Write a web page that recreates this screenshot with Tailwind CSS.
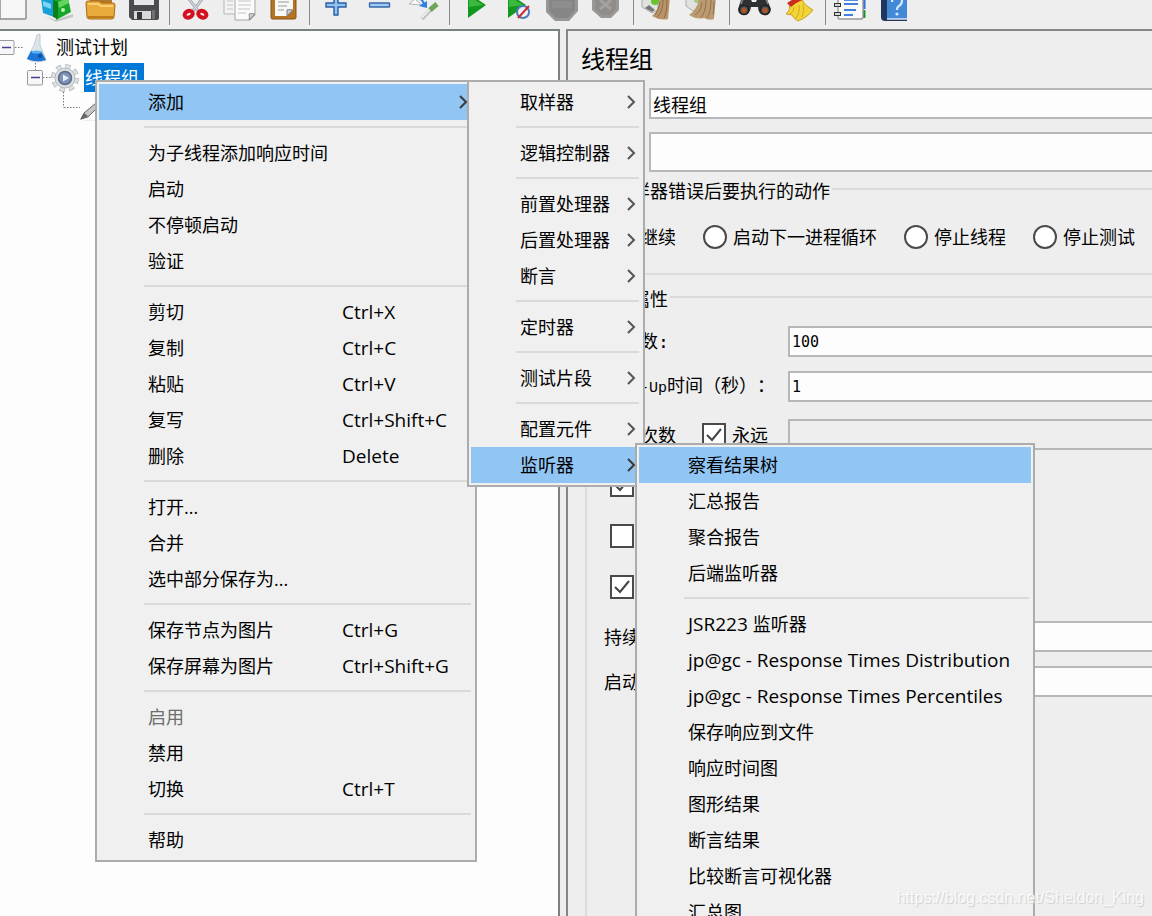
<!DOCTYPE html>
<html lang="zh-CN">
<head>
<meta charset="utf-8">
<meta name="viewport" content="width=device-width, initial-scale=1">
<title>测试计划</title>
<script src="https://cdn.jsdelivr.net/npm/@tailwindcss/browser@4"></script>
</head>
<body class="bg-[#eeeeee] text-black text-[18px] leading-6 font-['Open_Sans','Noto_Sans_CJK_SC',sans-serif] [text-spacing-trim:space-all]">
<div class="relative flex h-screen flex-col overflow-hidden">

<!-- Toolbar -->
<header class="flex h-[29px] shrink-0 overflow-hidden -ml-[9px] [&>button]:w-11 [&>button]:shrink-0 [&>i]:w-2 [&>i]:shrink-0 [&>i]:flex [&>i]:justify-center [&>i]:h-[25px] [&>i]:pr-1 [&_svg]:block">
  <button aria-label="新建"><svg width="44" height="29" viewBox="-9 0 44 29"><rect x="0" y="-6" width="26" height="25" rx="1" fill="#f7f7f7" stroke="#8d8d8d" stroke-width="1.5"/></svg></button>
  <button aria-label="模板"><svg width="44" height="29" viewBox="35 0 44 29"><path d="M45 16l10 4 18-6v3l-17 5z" fill="#c5c5c5"/><path d="M41-2l6-2 7 3v18l-11-4z" fill="#16a0d8"/><path d="M43 1l8 3v5l-8-3z" fill="#7fd3f2"/><path d="M53-2h15l3 14-15 8z" fill="#16a72a"/><path d="M53 0l5 2v17l-5-2z" fill="#0b7f1a"/><path d="M58 2l10-4 1 5-10 5z" fill="#62d65e"/><circle cx="63" cy="10" r="2" fill="#bdf1b4"/></svg></button>
  <button aria-label="打开"><svg width="44" height="29" viewBox="79 0 44 29"><path d="M90-3h22v12H90z" fill="#b07a2c"/><path d="M86 3q0-2 2-2h11l3 2h11q2 0 2 2l-1 12q0 2-3 2H90q-3 0-3-2z" fill="#e9ab3c" stroke="#a96c14"/><path d="M88 4h10l3 2h12" stroke="#ffdc87" fill="none" stroke-width="1.5"/><path d="M88 17h25" stroke="#bd7b1a" stroke-width="2"/></svg></button>
  <button aria-label="保存"><svg width="44" height="29" viewBox="123 0 44 29"><path d="M129-4h30v22q0 2-2 2h-25l-3-3z" fill="#4c4c50"/><path d="M134-3h20v8h-20z" fill="#e7e7e7"/><path d="M134 11h17v8h-17z" fill="#d9d9d9"/><path d="M137 12h5v7h-5z" fill="#37373a"/><path d="M152 10h3v9h-3z" fill="#717175"/></svg></button>
  <i><span class="w-px bg-[#8a8a8a]"></span></i>
  <button aria-label="剪切"><svg width="44" height="29" viewBox="175 0 44 29"><path d="M188-2l11 14M203-2l-11 14" stroke="#a6adb8" stroke-width="3"/><path d="M188-2l11 14M203-2l-11 14" stroke="#e3e8ee" stroke-width="1"/><ellipse cx="188.500" cy="14.500" rx="4.200" ry="3.200" transform="rotate(-25 188 14)" fill="none" stroke="#d3121f" stroke-width="4"/><ellipse cx="202.500" cy="14.500" rx="4.200" ry="3.200" transform="rotate(25 203 14)" fill="none" stroke="#d3121f" stroke-width="4"/></svg></button>
  <button aria-label="复制"><svg width="44" height="29" viewBox="219 0 44 29"><path d="M224-5h18v19h-18z" fill="#f3f3f3" stroke="#b5b5b5"/><path d="M235-4h20v19l-5 5h-15z" fill="#fafafa" stroke="#a5a5a5"/><path d="M238 1h13M238 5h13M238 9h12M238 13h8M227 1h6M227 5h6M227 9h6" stroke="#c4c4c4"/><path d="M255 14q-6-1-6 0 1 3 0 6z" fill="#cfcfcf" stroke="#8e8e8e"/></svg></button>
  <button aria-label="粘贴"><svg width="44" height="29" viewBox="263 0 44 29"><rect x="271" y="-6" width="25" height="25" rx="1.500" fill="#b57324" stroke="#8a5312"/><path d="M275-4h18v14l-6 6h-12z" fill="#f8f8f8"/><path d="M278 2h11M278 6h9M278 10h6" stroke="#999"/><path d="M293 10q-6-1-6 0v6z" fill="#c9c9c9" stroke="#7e7e7e"/></svg></button>
  <i><span class="w-px bg-[#8a8a8a]"></span></i>
  <button aria-label="展开"><svg width="44" height="29" viewBox="315 0 44 29"><path d="M334-5h4v8h8v4h-8v8h-4v-8h-8v-4h8z" fill="#8fc3f0" stroke="#2b5fa4" stroke-width="1.400"/></svg></button>
  <button aria-label="折叠"><svg width="44" height="29" viewBox="359 0 44 29"><rect x="369.500" y="3" width="20" height="4" rx=".5" fill="#a0cbf3" stroke="#3767a8" stroke-width="1.400"/></svg></button>
  <button aria-label="切换"><svg width="44" height="29" viewBox="403 0 44 29"><path d="M409 4l6-5 7 6z" fill="#fafafa" stroke="#aeb4ba"/><path d="M417-2q5 0 7 6" fill="none" stroke="#2d7fe0" stroke-width="2"/><path d="M419 6l8 2V1z" fill="#2d7fe0"/><path d="M422 19l10-11" stroke="#b9bdbb" stroke-width="3.500"/><path d="M422 18l10-11" stroke="#f3f5f4" stroke-width="1.500"/><path d="M430 10l7-6" stroke="#6fa558" stroke-width="5"/></svg></button>
  <i><span class="w-px bg-[#8a8a8a]"></span></i>
  <button aria-label="启动"><svg width="44" height="29" viewBox="455 0 44 29"><path d="M468-7l18 12-18 13z" fill="#12981c"/><path d="M469-4l14 9-14 2z" fill="#3cb83e"/></svg></button>
  <button aria-label="不停顿启动"><svg width="44" height="29" viewBox="499 0 44 29"><path d="M508-7l18 12-18 13z" fill="#12981c"/><path d="M509-4l14 9-14 2z" fill="#3cb83e"/><circle cx="523" cy="12" r="6" fill="#eef2f8" fill-opacity=".85" stroke="#4a7cbd" stroke-width="2"/><path d="M518 18l11-12" stroke="#d0282c" stroke-width="2"/></svg></button>
  <button aria-label="停止" disabled><svg width="44" height="29" viewBox="543 0 44 29"><path d="M546-3h32v14l-9 10h-14l-9-9z" fill="#979797"/><path d="M549-2h26v12l-7 8h-12l-7-7z" fill="#868686"/><path d="M552 1h20v7h-20z" fill="#8e8e8e"/></svg></button>
  <button aria-label="关闭" disabled><svg width="44" height="29" viewBox="587 0 44 29"><path d="M592-3h27v13l-8 8h-10l-9-8z" fill="#9a9896"/><path d="M595-3h21v12l-6 6h-8l-7-6z" fill="#8f8c8a"/><path d="M600 0l11 9M611 0l-11 9" stroke="#a5a19e" stroke-width="3"/></svg></button>
  <i><span class="w-px bg-[#8a8a8a]"></span></i>
  <button aria-label="清除"><svg width="44" height="29" viewBox="639 0 44 29"><path d="M642-2h16v12l-6 3-10-6z" fill="#dfe2df" stroke="#a9aca9"/><path d="M645 8l7 4 3-2-6-5z" fill="#777"/><circle cx="655" cy="1" r="4" fill="#67c42f"/><path d="M659-3h11l-2 22q-8 2-16-3 8-6 7-19z" fill="#b8936a"/><path d="M663 0q0 12-6 17M667 0q0 12-3 18M660 2q-1 8-5 13" stroke="#8c6c48" fill="none"/></svg></button>
  <button aria-label="清除全部"><svg width="44" height="29" viewBox="683 0 44 29"><path d="M686-2h13v9l-6 4-7-5z" fill="#dfe2df" stroke="#a9aca9"/><circle cx="697" cy="0" r="3" fill="#a5cc7e"/><path d="M699-3h17l-2 22q-5 2-10-1-7 2-15-3 9-6 10-18z" fill="#bd9b70"/><path d="M702 2q-1 10-7 13M706 0q0 12-5 17M711 0q0 12-4 18M714 1q0 10-1 14" stroke="#8f7150" fill="none"/></svg></button>
  <i><span class="w-px bg-[#8a8a8a]"></span></i>
  <button aria-label="查找"><svg width="44" height="29" viewBox="735 0 44 29"><path d="M742-3h8l2 5h4l2-5h8l5 12q-1 7-7 6-6-1-6-8h-7q-1 7-6 8-7 0-7-6z" fill="#2e3033"/><circle cx="744" cy="10" r="4.500" fill="#555" stroke="#202020" stroke-width="1.500"/><circle cx="765" cy="10" r="4.500" fill="#555" stroke="#202020" stroke-width="1.500"/><circle cx="744" cy="10.500" r="2.500" fill="#b2551f"/><circle cx="765" cy="10.500" r="2.500" fill="#b2551f"/><path d="M743-1l-2 5M766-1l2 5" stroke="#83878b" stroke-width="1.500"/></svg></button>
  <button aria-label="重置查找"><svg width="44" height="29" viewBox="779 0 44 29"><path d="M789 4l13-5q2 6 11 11-5 7-15 11-4-2-6-6l-6-1q5-4 3-10z" fill="#f3d437" stroke="#c9a223"/><path d="M787 3q6-4 15-8l3 4q-9 3-14 8z" fill="#cc2c20"/><path d="M794 7q0 5-4 7M799 5q1 8-3 13M803 4q2 7-1 13" stroke="#d1aa25" fill="none"/></svg></button>
  <i><span class="w-px bg-[#8a8a8a]"></span></i>
  <button aria-label="函数助手"><svg width="44" height="29" viewBox="831 0 44 29"><rect x="858" y="-5" width="7.500" height="14" fill="#2b6fe0"/><rect x="858" y="10" width="7.500" height="8" rx="1" fill="#1d932a"/><rect x="838" y="-5" width="25" height="24" rx="2" fill="#fafafa" stroke="#999" stroke-width="1.400"/><path d="M844 4h14M844 10h12M844 15h9" stroke="#4181dd" stroke-width="1.800"/><path d="M844 0h14" stroke="#4181dd" stroke-width="1.800"/><path d="M834 5h7M834 14h7" stroke="#333" stroke-width="4"/><path d="M835 5h5M835 14h5" stroke="#d8d8d8" stroke-width="2"/></svg></button>
  <button aria-label="帮助"><svg width="44" height="29" viewBox="875 0 44 29"><path d="M881-5h26v26h-22q-4 0-4-4z" fill="#20365f"/><path d="M887-5h20v24h-20z" fill="#4289d8"/><path d="M887 19h20" stroke="#e1e6ee" stroke-width="1.500"/><path d="M892 2q0-5 5-5t5 4q0 3-3 5-2 1-2 4" stroke="#d5e7fa" stroke-width="2.200" fill="none"/><circle cx="897" cy="14" r="1.600" fill="#d5e7fa"/></svg></button>
</header>

<main class="flex min-h-0 flex-1">
  <!-- Test plan tree -->
  <nav aria-label="测试计划树" class="w-[560px] shrink-0 border-t-2 border-r-2 border-[#7b8080] bg-[#fdfdfd]">
    <div class="flex h-[32px] items-center">
      <svg width="50" height="32" viewBox="0 31 50 32" class="shrink-0"><path d="M15 47.500h9" stroke="#777" stroke-dasharray="1.500 1.500"/><rect x="-1" y="40.500" width="15" height="14" rx="1" fill="#f7f7f7" stroke="#999"/><path d="M2 47.500h9" stroke="#4a3e92" stroke-width="1.500"/><path d="M37 35l3-1v11l6 15q-10 4-19-1l7-14z" fill="#dde5ec" stroke="#b9c2c9" stroke-width=".8"/><path d="M31 51h10l5 9q-10 3-19-1z" fill="#1b76d6"/><ellipse cx="36.500" cy="52" rx="5" ry="1.500" fill="#56b1f5"/><circle cx="40" cy="56" r="2" fill="#0d4fa5"/></svg>
      <button class="ml-1.5">测试计划</button>
    </div>
    <div class="flex h-[30px] items-center">
      <svg width="84" height="60" viewBox="0 63 84 60" class="shrink-0 self-start"><path d="M35.500 63v7M43 77.500h9M63.500 92v15.500M64 107.500h16" stroke="#777" stroke-dasharray="1.500 1.500" fill="none"/><rect x="27.500" y="70.500" width="15" height="14.500" rx="1" fill="#f7f7f7" stroke="#999"/><path d="M31 77.500h9" stroke="#4a3e92" stroke-width="1.500"/><circle cx="65" cy="78" r="11.500" fill="none" stroke="#aeb3ba" stroke-width="5" stroke-dasharray="5 4.030"/><circle cx="65" cy="78" r="11.500" fill="none" stroke="#dfe1e4" stroke-width="3.500" stroke-dasharray="4 5.030" stroke-dashoffset="-.5"/><circle cx="65" cy="78" r="10" fill="#dcdfe3" stroke="#b5bac1"/><circle cx="65" cy="78" r="6.500" fill="#7e93b5" stroke="#5c6b84" stroke-width="1.500"/><path d="M63 74.500l6 3.500-6 3.500z" fill="#e6eefa"/></svg>
      <button class="h-[29px] w-[60px] self-start bg-[#0078d7] pl-px text-left text-white">线程组</button>
    </div>
    <svg width="20" height="20" viewBox="80 101 20 20" class="ml-20 mt-2 block"><path d="M81 119l3-6 12-10 3 3-11 11z" fill="#c7c7c7" stroke="#666"/><path d="M80 120l4-7 4 3z" fill="#666"/><path d="M84 121h14" stroke="#ddd"/></svg>
  </nav>

  <!-- Thread group form -->
  <section aria-labelledby="title" class="ml-1.5 flex min-w-0 flex-1 flex-col overflow-hidden border-t-2 border-l-2 border-[#858585]">
    <h1 id="title" class="flex h-[57px] shrink-0 items-center pb-0.5 pl-[13px] text-[24px]">线程组</h1>
    <div class="flex h-[31px] shrink-0 items-center pl-[18px]">
      <label for="name" class="w-[63px] shrink-0">名称：</label>
      <input id="name" value="线程组" class="h-full min-w-0 flex-1 border-2 border-r-0 border-[#b4b8ba] bg-[#fdfdfd] px-0.5">
    </div>
    <div class="mt-[13px] flex h-10 shrink-0 items-center pl-[18px]">
      <label for="comment" class="w-[63px] shrink-0">注释：</label>
      <input id="comment" class="h-full min-w-0 flex-1 border-2 border-r-0 border-[#b4b8ba] bg-[#fdfdfd] px-0.5">
    </div>
    <fieldset class="ml-[17px] mt-[3px] shrink-0 border-2 border-r-0 border-[#dcdcdc] pt-[22px] pb-6 pl-[23px] [&_input]:size-6 [&_input]:appearance-none [&_input]:rounded-full [&_input]:border-2 [&_input]:border-[#4a4a4a] [&_input]:bg-white [&_input:checked]:border-[7px]">
      <legend class="-ml-4 px-0.5 pt-1">在取样器错误后要执行的动作</legend>
      <div class="flex gap-[27px] whitespace-nowrap [&>label]:flex [&>label]:h-6 [&>label]:items-center [&>label]:gap-1.5">
        <label><input type="radio" name="onerror" checked>继续</label>
        <label><input type="radio" name="onerror">启动下一进程循环</label>
        <label><input type="radio" name="onerror">停止线程</label>
        <label><input type="radio" name="onerror">停止测试</label>
      </div>
    </fieldset>
    <fieldset class="ml-[17px] mt-2 min-h-0 flex-1 border-2 border-r-0 border-b-0 border-[#dcdcdc] pt-[15px] pl-[17px]">
      <legend class="-ml-2.5 px-0.5 pt-1">线程属性</legend>
      <div class="flex h-[31px] items-center">
        <label for="threads" class="w-[184px] shrink-0">线程数<span class="font-['DejaVu_Sans_Mono',monospace]">:</span></label>
        <input id="threads" value="100" class="h-full min-w-0 flex-1 border-2 border-r-0 border-[#b4b8ba] bg-[#fdfdfd] px-0.5 font-['DejaVu_Sans_Mono',monospace] text-[15px]">
      </div>
      <div class="mt-3.5 flex h-[31px] items-center">
        <label for="ramp" class="w-[184px] shrink-0 whitespace-nowrap"><span class="font-['Liberation_Mono',monospace] text-[15px]">Ramp-Up</span>时间（秒）：</label>
        <input id="ramp" value="1" class="h-full min-w-0 flex-1 border-2 border-r-0 border-[#b4b8ba] bg-[#fdfdfd] px-0.5 font-['DejaVu_Sans_Mono',monospace] text-[15px]">
      </div>
      <div class="mt-[17px] flex h-[31px] items-center">
        <span class="w-[98px] shrink-0">循环次数</span>
        <label class="flex w-[86px] shrink-0 items-center gap-1.5"><span class="relative size-6"><input type="checkbox" checked class="block size-6 appearance-none border-2 border-[#4a4a4a] bg-white"><svg class="pointer-events-none absolute inset-0" width="24" height="24" fill="none" stroke="#444" stroke-width="2"><path d="M5 12l5 5 9-11"/></svg></span>永远</label>
        <input aria-label="循环次数" disabled class="h-full min-w-0 flex-1 border-2 border-r-0 border-[#b4b8ba] bg-[#eeeeee]">
      </div>
      <div class="mt-[23px] flex flex-col gap-[27px] pl-1.5 [&>label]:flex [&>label]:items-center [&>label]:gap-1.5">
        <label><span class="relative size-6"><input type="checkbox" aria-label="每次迭代使用相同用户" checked class="block size-6 appearance-none border-2 border-[#4a4a4a] bg-white"><svg class="pointer-events-none absolute inset-0" width="24" height="24" fill="none" stroke="#444" stroke-width="2"><path d="M5 12l5 5 9-11"/></svg></span></label>
        <label><input type="checkbox" aria-label="延迟创建线程直到需要" class="block size-6 appearance-none border-2 border-[#4a4a4a] bg-white"></label>
        <label><span class="relative size-6"><input type="checkbox" aria-label="调度器" checked class="block size-6 appearance-none border-2 border-[#4a4a4a] bg-white"><svg class="pointer-events-none absolute inset-0" width="24" height="24" fill="none" stroke="#444" stroke-width="2"><path d="M5 12l5 5 9-11"/></svg></span></label>
      </div>
      <div class="mt-[22px] flex h-[31px] items-center">
        <label for="duration" class="w-[184px] shrink-0">持续时间（秒）</label>
        <input id="duration" class="h-full min-w-0 flex-1 border-2 border-r-0 border-[#b4b8ba] bg-[#fdfdfd] px-0.5">
      </div>
      <div class="mt-3.5 flex h-[31px] items-center">
        <label for="delay" class="w-[184px] shrink-0">启动延迟（秒）</label>
        <input id="delay" class="h-full min-w-0 flex-1 border-2 border-r-0 border-[#b4b8ba] bg-[#fdfdfd] px-0.5">
      </div>
    </fieldset>
  </section>
</main>

<!-- Context menu -->
<div role="menu" aria-label="线程组" class="absolute left-[95px] top-[80px] flex w-[382px] flex-col border-2 border-[#acacac] bg-[#f0f0f0] p-0.5 [&>button]:flex [&>button]:h-9 [&>button]:items-center [&>button]:pl-[49px] [&>button]:text-left [&>hr]:mt-[6px] [&>hr]:mb-[7px] [&>hr]:ml-[45px] [&>hr]:mr-0.5 [&>hr]:border-t-2 [&>hr]:border-[#dadada] [&_span]:w-[194px] [&_kbd]:font-['Open_Sans',sans-serif] [&_kbd]:text-[19px]">
  <button role="menuitem" class="bg-[#91c6f4]"><span>添加</span><svg class="ml-[117px]" width="10" height="16" fill="none" stroke="#3a3a3a" stroke-width="2"><path d="M1 2l6 6-6 6"/></svg></button>
  <hr>
  <button role="menuitem">为子线程添加响应时间</button>
  <button role="menuitem">启动</button>
  <button role="menuitem">不停顿启动</button>
  <button role="menuitem">验证</button>
  <hr>
  <button role="menuitem"><span>剪切</span><kbd>Ctrl+X</kbd></button>
  <button role="menuitem"><span>复制</span><kbd>Ctrl+C</kbd></button>
  <button role="menuitem"><span>粘贴</span><kbd>Ctrl+V</kbd></button>
  <button role="menuitem"><span>复写</span><kbd>Ctrl+Shift+C</kbd></button>
  <button role="menuitem"><span>删除</span><kbd>Delete</kbd></button>
  <hr>
  <button role="menuitem">打开...</button>
  <button role="menuitem">合并</button>
  <button role="menuitem">选中部分保存为...</button>
  <hr>
  <button role="menuitem"><span>保存节点为图片</span><kbd>Ctrl+G</kbd></button>
  <button role="menuitem"><span>保存屏幕为图片</span><kbd>Ctrl+Shift+G</kbd></button>
  <hr>
  <button role="menuitem" disabled class="text-[#6d6d6d]">启用</button>
  <button role="menuitem">禁用</button>
  <button role="menuitem"><span>切换</span><kbd>Ctrl+T</kbd></button>
  <hr>
  <button role="menuitem">帮助</button>
</div>

<!-- Submenu: 添加 -->
<div role="menu" aria-label="添加" class="absolute left-[467px] top-[80px] flex w-[178px] flex-col border-2 border-[#acacac] bg-[#f0f0f0] p-0.5 [&>button]:flex [&>button]:h-9 [&>button]:items-center [&>button]:justify-between [&>button]:pl-[49px] [&>button]:pr-1 [&>button]:text-left [&>hr]:mt-[6px] [&>hr]:mb-[7px] [&>hr]:ml-[45px] [&>hr]:mr-0.5 [&>hr]:border-t-2 [&>hr]:border-[#dadada]">
  <button role="menuitem">取样器<svg width="10" height="16" fill="none" stroke="#555" stroke-width="2"><path d="M1 2l6 6-6 6"/></svg></button>
  <hr>
  <button role="menuitem">逻辑控制器<svg width="10" height="16" fill="none" stroke="#555" stroke-width="2"><path d="M1 2l6 6-6 6"/></svg></button>
  <hr>
  <button role="menuitem">前置处理器<svg width="10" height="16" fill="none" stroke="#555" stroke-width="2"><path d="M1 2l6 6-6 6"/></svg></button>
  <button role="menuitem">后置处理器<svg width="10" height="16" fill="none" stroke="#555" stroke-width="2"><path d="M1 2l6 6-6 6"/></svg></button>
  <button role="menuitem">断言<svg width="10" height="16" fill="none" stroke="#555" stroke-width="2"><path d="M1 2l6 6-6 6"/></svg></button>
  <hr>
  <button role="menuitem">定时器<svg width="10" height="16" fill="none" stroke="#555" stroke-width="2"><path d="M1 2l6 6-6 6"/></svg></button>
  <hr>
  <button role="menuitem">测试片段<svg width="10" height="16" fill="none" stroke="#555" stroke-width="2"><path d="M1 2l6 6-6 6"/></svg></button>
  <hr>
  <button role="menuitem">配置元件<svg width="10" height="16" fill="none" stroke="#555" stroke-width="2"><path d="M1 2l6 6-6 6"/></svg></button>
  <button role="menuitem" class="bg-[#91c6f4]">监听器<svg width="10" height="16" fill="none" stroke="#3a3a3a" stroke-width="2"><path d="M1 2l6 6-6 6"/></svg></button>
</div>

<!-- Submenu: 监听器 -->
<div role="menu" aria-label="监听器" class="absolute left-[635px] top-[443px] flex w-[400px] flex-col border-2 border-[#acacac] bg-[#f0f0f0] p-0.5 [&>button]:h-9 [&>button]:whitespace-nowrap [&>button]:pl-[49px] [&>button]:text-left [&>hr]:mt-[6px] [&>hr]:mb-[7px] [&>hr]:ml-[45px] [&>hr]:mr-0.5 [&>hr]:border-t-2 [&>hr]:border-[#dadada]">
  <button role="menuitem" class="bg-[#91c6f4]">察看结果树</button>
  <button role="menuitem">汇总报告</button>
  <button role="menuitem">聚合报告</button>
  <button role="menuitem">后端监听器</button>
  <hr>
  <button role="menuitem"><span class="text-[19px]">JSR223 </span>监听器</button>
  <button role="menuitem" class="text-[19px]">jp@gc - Response Times Distribution</button>
  <button role="menuitem" class="text-[19px]">jp@gc - Response Times Percentiles</button>
  <button role="menuitem">保存响应到文件</button>
  <button role="menuitem">响应时间图</button>
  <button role="menuitem">图形结果</button>
  <button role="menuitem">断言结果</button>
  <button role="menuitem">比较断言可视化器</button>
  <button role="menuitem">汇总图</button>
</div>

<p class="absolute bottom-1.5 right-2 font-['Liberation_Sans',sans-serif] text-[16px] text-white/80 [text-shadow:1px_1px_1px_#cccccc]">https://blog.csdn.net/Sheldon_King</p>
</div>
</body>
</html>
